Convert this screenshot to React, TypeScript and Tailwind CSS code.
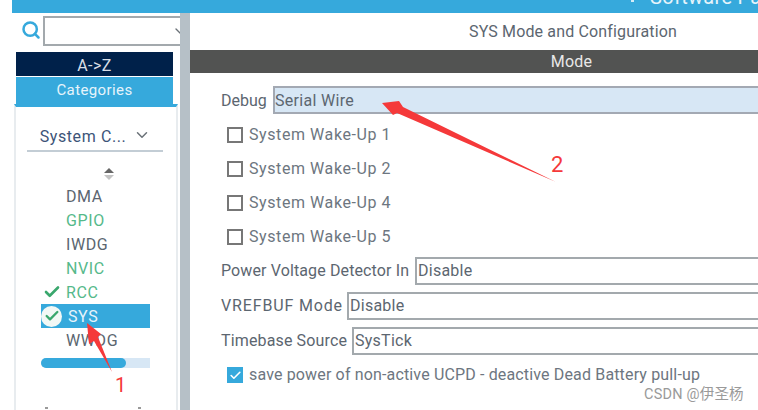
import { Check, ChevronDown, Search } from "lucide-react";

const peripherals = [
  { name: "DMA", tone: "text-[#5b6670]" },
  { name: "GPIO", tone: "text-[#55b98a]" },
  { name: "IWDG", tone: "text-[#5b6670]" },
  { name: "NVIC", tone: "text-[#55b98a]" },
  { name: "RCC", tone: "text-[#55b98a]", ok: true },
  { name: "SYS", tone: "text-[#e6f4fb]", ok: true, active: true },
  { name: "WWDG", tone: "text-[#5b6670]" },
];

const wakeUps = ["System Wake-Up 1", "System Wake-Up 2", "System Wake-Up 4", "System Wake-Up 5"];

function PeripheralRow({ name, tone, ok, active }: { name: string; tone: string; ok?: boolean; active?: boolean }) {
  return (
    <div className={`flex h-6 w-[109px] items-center ${active ? "bg-[#36a9dc]" : ""}`}>
      <span className="flex w-[25px] shrink-0 items-center justify-start">
        {ok && active && (
          <span className="flex size-[21px] items-center justify-center rounded-full bg-[#f2f8f5]">
            <Check size={16} strokeWidth={3.5} className="text-[#3aa76d]" />
          </span>
        )}
        {ok && !active && <Check size={18} strokeWidth={3.5} className="ml-[2px] text-[#3aa76d]" />}
      </span>
      <span className={`${active ? "ml-[2px]" : ""} pt-[2px] text-base tracking-[0.6px] ${tone}`}>{name}</span>
    </div>
  );
}

function Sidebar() {
  return (
    <aside className="flex w-[168px] shrink-0 flex-col overflow-hidden">
      <div className="flex h-[39px] items-end gap-[2px] pb-[6px] pl-[9px]">
        <Search size={20} strokeWidth={3} className="mb-[6px] shrink-0 text-[#36a9dc]" />
        <div className="flex h-[30px] flex-1 items-center justify-end border-2 border-r-0 border-[#a3a9ad] bg-white">
          <ChevronDown size={16} className="-mr-[8px] text-[#6b7278]" />
        </div>
      </div>
      <div className="ml-[4px] flex h-[24px] w-[157px] items-center justify-center self-start bg-[#00214a] pt-[3px] text-base tracking-[0.4px] text-[#d8dee6]">
        A-&gt;Z
      </div>
      <div className="mt-px ml-[4px] flex h-[27px] w-[157px] items-center justify-center self-start bg-[#36a9dc] text-[15px] tracking-[0.4px] text-[#e6f4fb]">
        Categories
      </div>
      <div className="ml-[2px] flex w-[164px] flex-1 flex-col border-x-2 border-t-[3px] border-x-[#e8ecef] border-t-[#36a9dc]">
        <div className="mx-[11px] mt-[18px] flex h-[27px] w-[136px] items-start justify-center gap-[7px] border-b-2 border-[#c3cdd5] pl-[1px]">
          <span className="text-base leading-[24px] tracking-[0.6px] text-[#3d5478]">System C...</span>
          <ChevronDown size={18} className="mt-[1px] text-[#6b7278]" />
        </div>
        <div className="flex flex-col pl-[25px]">
          <div className="mt-[16px] ml-[63px] flex flex-col items-start gap-[2px]">
            <span className="h-0 w-0 border-x-[5px] border-b-[5px] border-x-transparent border-b-[#666]" />
            <span className="h-0 w-0 border-x-[5px] border-t-[5px] border-x-transparent border-t-[#c4c4c4]" />
          </div>
          <div className="mt-[4px] flex flex-col">
            {peripherals.map((p) => (
              <PeripheralRow key={p.name} {...p} />
            ))}
          </div>
          <div className="mt-[6px] h-[10px] w-[109px] rounded-l-full bg-[#d7e7f5]">
            <div className="h-full w-[85px] rounded-full bg-[#36a9dc]" />
          </div>
          <div className="mt-[39px] flex w-[100px] items-start justify-between pl-[4px]">
            <span className="h-[2px] w-[3px] bg-[#9a9a9a]" />
            <span className="h-[2px] w-[3px] bg-[#9a9a9a]" />
          </div>
        </div>
      </div>
    </aside>
  );
}

function SelectRow({ label, value, labelClass }: { label: string; value: string; labelClass: string }) {
  return (
    <div className="flex h-[35px] items-center pl-[31px]">
      <span className={`shrink-0 whitespace-nowrap text-base text-[#5c6670] ${labelClass}`}>{label}</span>
      <div className="flex h-[28px] flex-1 items-center border-2 border-r-0 border-[#a3a9ad] pl-[1px] text-base tracking-[0.25px] text-[#5c6670]">
        {value}
      </div>
    </div>
  );
}

function WakeUpRow({ label }: { label: string }) {
  return (
    <div className="flex h-[34px] items-center pl-[37px]">
      <span className="size-[16px] border-2 border-[#777] bg-white" />
      <span className="ml-[6px] text-base tracking-[0.58px] text-[#6d7680]">{label}</span>
    </div>
  );
}

function MainPanel() {
  return (
    <main className="min-w-0 flex-1 overflow-hidden">
      <div className="w-[766px]">
        <h1 className="flex h-[37px] items-center justify-center text-base font-normal tracking-[0.15px] text-[#5c6670]">
          SYS Mode and Configuration
        </h1>
        <div className="flex h-[23px] items-center justify-center bg-[#525352] pr-[3px] text-base tracking-[0.2px] text-[#e8e8e8]">
          Mode
        </div>
        <div className="mt-[13px] flex h-[28px] items-center pl-[31px]">
          <span className="w-[52px] shrink-0 pt-[2px] text-base text-[#5c6670]">Debug</span>
          <div className="flex h-full flex-1 items-center border-2 border-r-0 border-[#a3a9b3] bg-[#d7e7f5] pt-[2px] text-base tracking-[0.3px] text-[#5c6670]">
            Serial Wire
          </div>
        </div>
        <div className="mt-[4px] flex flex-col">
          {wakeUps.map((w) => (
            <WakeUpRow key={w} label={w} />
          ))}
        </div>
        <div className="-mt-px flex flex-col">
          <SelectRow label="Power Voltage Detector In" value="Disable" labelClass="w-[194px] tracking-[0.12px]" />
          <SelectRow label="VREFBUF Mode" value="Disable" labelClass="w-[126px] tracking-[0.85px]" />
          <SelectRow label="Timebase Source" value="SysTick" labelClass="w-[131px] tracking-[0.14px]" />
        </div>
        <div className="flex h-[34px] items-center pl-[37px]">
          <span className="flex size-[16px] items-center justify-center bg-[#36a9dc]">
            <Check size={13} strokeWidth={3} className="text-white" />
          </span>
          <span className="ml-[6px] text-base tracking-[0.15px] text-[#6d7680]">save power of non-active UCPD - deactive Dead Battery pull-up</span>
        </div>
      </div>
    </main>
  );
}

export default function App() {
  return (
    <div className="relative flex h-[410px] w-[758px] flex-col overflow-hidden bg-white font-['Roboto','Liberation_Sans',sans-serif]">
      <header className="ml-[12px] flex h-[13px] shrink-0 items-start overflow-hidden bg-[#36a9dc] pl-[619px]">
        <span className="h-[2px] w-[3px] shrink-0 bg-[#d5ecf7]" />
        <span className="-mt-[14px] ml-[16px] whitespace-nowrap text-xl leading-[22px] tracking-[0.3px] text-[#e6f4fb]">Software Pa</span>
      </header>
      <div className="ml-[12px] flex min-h-0 flex-1">
        <Sidebar />
        <div className="w-[10px] shrink-0 bg-[#b6c0c7]" />
        <MainPanel />
      </div>

      {/* hand drawn annotations on top of the screenshot */}
      <svg className="pointer-events-none absolute left-0 top-0" width="758" height="410" viewBox="0 0 758 410">
        <polygon points="382,103 399,101 403,107 556,182 397,113 393,115" fill="#f5393a" />
        <polygon points="87,323 101,334 98,337 112,372 94,341 89,344" fill="#f5393a" />
      </svg>
      <span className="absolute left-[115px] top-[374px] text-[20px] leading-[22px] text-[#f5393a]">1</span>
      <span className="absolute left-[551px] top-[153px] text-[22px] leading-[24px] text-[#f5393a]">2</span>
      <span className="absolute left-[644px] top-[386px] font-['Roboto','Noto_Sans_CJK_SC',sans-serif] text-[14.5px] leading-[18px] tracking-[0.2px] text-[#9a9a9a]">
        CSDN @伊圣杨
      </span>
    </div>
  );
}
